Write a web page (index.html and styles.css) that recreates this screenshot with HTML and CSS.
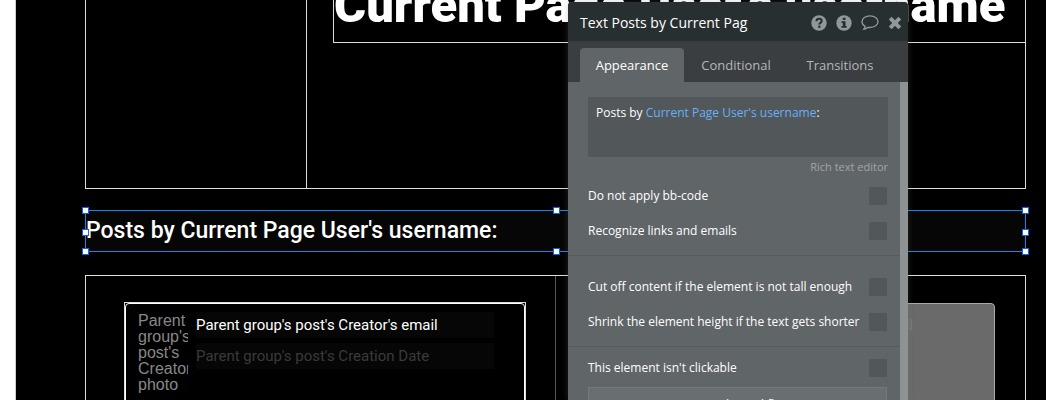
FILE: index.html
```html
<!DOCTYPE html>
<html lang="en">
<head>
<meta charset="utf-8">
<title>Text Posts by Current Page User</title>
<link rel="stylesheet" href="styles.css">
</head>
<body>
<main class="canvas">
  <section class="profile">
    <div class="avatar"></div>
    <div class="details"><div class="name-box"><h1 class="name">Current Page User's username</h1></div></div>
  </section>

  <section class="selected">
    <h2 class="selected-text">Posts by Current Page User's username:</h2>
    <i class="handle top left"></i><i class="handle top center"></i><i class="handle top right"></i>
    <i class="handle middle left"></i><i class="handle middle right"></i>
    <i class="handle bottom left"></i><i class="handle bottom center"></i><i class="handle bottom right"></i>
  </section>

  <section class="posts">
    <div class="cell">
      <div class="frame">
        <article class="card">
          <p class="photo">Parent group's post's Creator's photo</p>
          <div class="lines">
            <p class="line">Parent group's post's Creator's email</p>
            <p class="line date">Parent group's post's Creation Date</p>
          </div>
        </article>
      </div>
    </div>
    <div class="cell">
      <div class="frame ghost">
        <article class="card">
          <p class="photo">Parent group's post's Creator's photo</p>
          <div class="lines">
            <p class="line">Parent group's post's Creator's email</p>
            <p class="line date">Parent group's post's Creation Date</p>
          </div>
        </article>
      </div>
    </div>
  </section>
</main>

<aside class="editor">
  <header class="editor-head">
    <span class="editor-title">Text Posts by Current Pag</span>
    <button class="icon" type="button" aria-label="Help">
      <svg width="16" height="16" viewBox="0 0 16 16"><circle cx="8" cy="8" r="7.7" fill="#8f999c"/><path d="M5.4 6.2C5.5 4.5 6.5 3.7 8 3.7c1.600 0 2.700.9 2.700 2.300 0 1.900-2.400 1.900-2.400 3.500" fill="none" stroke="#282f31" stroke-width="2"/><rect x="7.200" y="10.600" width="2.200" height="2.200" fill="#282f31"/></svg>
    </button>
    <button class="icon" type="button" aria-label="Information">
      <svg width="16" height="16" viewBox="0 0 16 16"><circle cx="8" cy="8" r="7.7" fill="#8f999c"/><path d="M6.800 2.800h2.700v2.200H6.800zM5.500 6.300h4v4.800h1.200v1.700H5.400v-1.700h1.400V8H5.500z" fill="#282f31"/></svg>
    </button>
    <button class="icon" type="button" aria-label="Comment">
      <svg width="18" height="16" viewBox="0 0 18 16"><path d="M9 .9C4.500.9 1 3.400 1 6.700c0 2 1.200 3.700 3.200 4.700-.2 1.300-.8 2.200-1.800 3 2-.2 3.500-1 4.500-2.100.7.1 1.400.2 2.100.2 4.500 0 8-2.500 8-5.800S13.500.9 9 .9z" fill="none" stroke="#8f999c" stroke-width="1.300" stroke-linejoin="round"/></svg>
    </button>
    <button class="icon" type="button" aria-label="Close">
      <svg width="14" height="14" viewBox="0 0 14 14"><path d="M2.200 2.200l9.600 9.600M11.800 2.200l-9.600 9.600" stroke="#8f999c" stroke-width="4"/></svg>
    </button>
  </header>
  <nav class="tabs">
    <button class="tab active" type="button">Appearance</button>
    <button class="tab" type="button">Conditional</button>
    <button class="tab" type="button">Transitions</button>
  </nav>
  <div class="panel">
    <form class="fields">
      <div class="expression" contenteditable="true" role="textbox" aria-label="Text">Posts by <span class="dynamic">Current Page User's username</span>:</div>
      <a class="rich" href="#">Rich text editor</a>
      <div class="group first">
        <label class="row">Do not apply bb-code<input class="check" type="checkbox"></label>
        <label class="row">Recognize links and emails<input class="check" type="checkbox"></label>
      </div>
      <div class="group second">
        <label class="row">Cut off content if the element is not tall enough<input class="check" type="checkbox"></label>
        <label class="row">Shrink the element height if the text gets shorter<input class="check" type="checkbox"></label>
      </div>
      <div class="group third">
        <label class="row">This element isn't clickable<input class="check" type="checkbox"></label>
        <button class="workflow" type="button">Start/Edit workflow</button>
      </div>
    </form>
    <div class="scrollbar"></div>
  </div>
</aside>
</body>
</html>
```

FILE: styles.css
```css
* { box-sizing: border-box; }

body {
  margin: 0;
  height: 100vh;
  overflow: hidden;
  display: flex;
  background: #fff;
  font-family: "Open Sans", sans-serif;
}

h1, h2, p { margin: 0; }
button { border: 0; padding: 0; background: none; font-family: inherit; }

.canvas {
  flex: 1;
  margin-left: 15px;
  padding: 0 20px 0 69px;
  border-left: 1px solid #ccc;
  background: #000;
  color: #fff;
  font-family: Roboto, sans-serif;
  display: flex;
  flex-direction: column;
}

.profile {
  flex: none;
  height: 189px;
  border: 1px solid #ddd;
  border-top: 0;
  display: grid;
  grid-template-columns: 221px 1fr;
}
.avatar { border-right: 1px solid #ddd; }
.details { padding-left: 26px; }
.name-box {
  height: 43px;
  padding-bottom: 8px;
  border: 1px solid #ddd;
  border-width: 0 0 1px 1px;
  display: flex;
  align-items: flex-end;
  overflow: hidden;
}
.name {
  font-size: 49px;
  line-height: 56px;
  font-weight: 900;
  white-space: nowrap;
}

.selected {
  position: relative;
  flex: none;
  margin-top: 21px;
  height: 42px;
  border: 1px solid #1c84e0;
  background: #060606;
}
.selected-text {
  font-size: 23px;
  line-height: 40px;
  font-weight: 500;
  white-space: nowrap;
}
.handle {
  position: absolute;
  width: 7px;
  height: 7px;
  border: 1px solid #0a62f5;
  background: #fff;
}
.top { top: -4px; }
.middle { top: 18px; }
.bottom { bottom: -4px; }
.left { left: -4px; }
.center { left: calc(50% - 3px); }
.right { right: -4px; }

.posts {
  flex: 1;
  min-height: 0;
  margin-top: 23px;
  border: 1px solid #ddd;
  border-bottom: 0;
  display: grid;
  grid-template-columns: 1fr 1fr;
  overflow: hidden;
}
.cell { padding: 26px 29px 0 38px; }
.cell:first-child { border-right: 1px solid #555; }
.frame { height: 200px; border: 1px solid #ddd; }
.card {
  height: 100%;
  padding: 8px 0 0 12px;
  border: 1px solid #fff;
  border-radius: 4px;
  display: flex;
  gap: 8px;
}
.photo {
  width: 50px;
  padding-top: 1px;
  font: 16px/16px "Liberation Sans", sans-serif;
  color: #888;
  overflow: hidden;
}
.lines {
  width: 298px;
  display: flex;
  flex-direction: column;
  gap: 5px;
}
.line {
  height: 26px;
  font-size: 15px;
  line-height: 26px;
  background: #060606;
  white-space: nowrap;
}
.date { color: #3a3a3a; }

.ghost { border-color: transparent; }
.ghost .card { gap: 14px; background: #6a6a6a; border-color: #aaa; }
.ghost .line { background: none; color: #7a7a7a; }
.ghost .photo { color: #7a7a7a; }

.editor {
  position: absolute;
  top: 2px;
  bottom: 0;
  left: 568px;
  width: 340px;
  border-radius: 4px 4px 0 0;
  overflow: hidden;
  display: flex;
  flex-direction: column;
  background: #606568;
  color: #fff;
  box-shadow: 0 0 6px rgba(120, 120, 120, 0.3);
}
.editor-head {
  flex: none;
  height: 39px;
  padding: 2px 6px 0 12px;
  display: flex;
  align-items: center;
  gap: 9px;
  background: #282f31;
}
.editor-title { flex: 1; font-size: 14px; line-height: 20px; }
.icon { display: flex; }

.tabs {
  flex: none;
  height: 41px;
  padding: 7px 12px 0;
  display: flex;
  background: #3a3e40;
}
.tab {
  width: 104px;
  height: 34px;
  border-radius: 4px 4px 0 0;
  font-size: 13px;
  color: #b4b7b8;
}
.active { background: #606568; color: #fff; }

.panel { flex: 1; min-height: 0; display: flex; }
.scrollbar { width: 8px; background: #8e9295; }
.fields {
  flex: 1;
  padding-top: 15px;
  display: flex;
  flex-direction: column;
  font-size: 12px;
  overflow: hidden;
}
.expression {
  flex: none;
  height: 60px;
  margin: 0 12px 0 20px;
  padding: 8px;
  line-height: 16px;
  background: #525759;
}
.dynamic { color: #68b0fa; }
.rich {
  align-self: flex-end;
  margin-right: 12px;
  font-size: 11px;
  line-height: 20px;
  color: #a2a5a7;
  text-decoration: none;
}
.group { padding: 0 13px 0 20px; border-bottom: 1px solid #565b5e; }
.group:last-child { border: 0; }
.first { padding-top: 1px; padding-bottom: 7px; }
.second { padding-top: 13px; padding-bottom: 7px; }
.third { padding-top: 3px; }
.row {
  height: 35px;
  display: flex;
  align-items: center;
  justify-content: space-between;
  white-space: nowrap;
}
.check {
  appearance: none;
  width: 18px;
  height: 18px;
  margin: 0;
  border-radius: 1px;
  background: #525759;
}
.workflow {
  width: 100%;
  height: 34px;
  margin-top: 2px;
  border: 1px solid #75797c;
  background: #696e71;
  color: #fff;
  font-size: 12px;
}
```
